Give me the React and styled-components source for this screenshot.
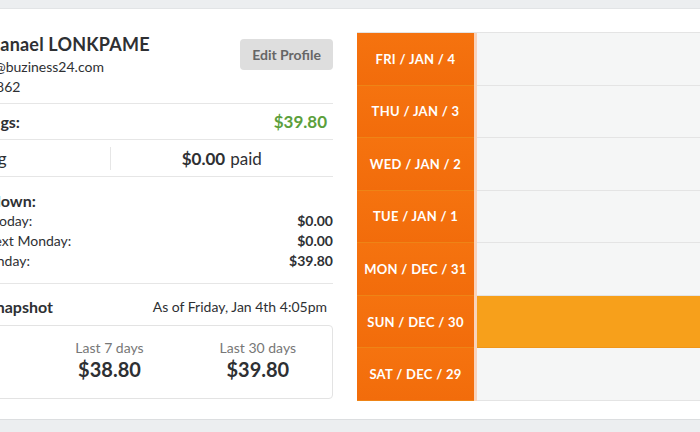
import React from 'react'
import styled, { createGlobalStyle } from 'styled-components'

const GlobalStyle = createGlobalStyle`
  html, body {
    margin: 0;
    padding: 0;
    overflow: hidden;
    background: #eceef0;
  }
  body {
    font-family: Lato, "Open Sans", Arial, sans-serif;
    color: #2e3033;
  }
`

const Page = styled.div`
  width: 700px;
  height: 432px;
  padding-top: 8px;
  box-sizing: border-box;
  overflow: hidden;
`

const Panel = styled.div`
  display: flex;
  gap: 24px;
  margin-left: -138px;
  width: 1100px;
  height: 412px;
  box-sizing: border-box;
  padding: 23px 24px 0;
  background: #fff;
  border-top: 1px solid #e2e4e6;
  border-bottom: 1px solid #dcdee0;
`

const Profile = styled.div`
  width: 447px;
  flex-shrink: 0;
`

const Header = styled.div`
  display: flex;
  justify-content: space-between;
  align-items: flex-start;
  padding-bottom: 6px;
  border-bottom: 1px solid #e6e6e6;
`

const Identity = styled.div`
  display: flex;
  gap: 12px;
`

const Avatar = styled.div`
  width: 62px;
  height: 62px;
  border-radius: 50%;
  background: #d9dcdf;
`

const Name = styled.div`
  font-size: 18px;
  font-weight: 700;
  line-height: 25px;
  letter-spacing: 0.2px;
`

const Line = styled.div`
  font-size: 14px;
  line-height: 20px;
`

const EditButton = styled.button`
  margin-top: 7px;
  height: 31px;
  width: 93px;
  border: none;
  border-radius: 4px;
  background: #dedede;
  color: #666;
  font-family: inherit;
  font-size: 14px;
  font-weight: 700;
`

const Row = styled.div`
  display: flex;
  align-items: center;
  justify-content: space-between;
  height: ${(p) => p.h}px;
  box-sizing: border-box;
  border-bottom: 1px solid #e6e6e6;
  font-size: 16px;
`

const SplitRow = styled.div`
  display: grid;
  grid-template-columns: 1fr 1fr;
  align-items: center;
  height: 37px;
  box-sizing: border-box;
  border-bottom: 1px solid #e6e6e6;
  font-size: 16px;
`

const Title = styled.span`
  font-weight: 700;
  font-size: 16px;
`

const Green = styled.span`
  color: #5c9f3c;
  font-weight: 700;
  font-size: 17px;
  padding-right: 6px;
`

const Half = styled.div`
  height: 23px;
  display: flex;
  align-items: center;
  justify-content: ${(p) => (p.right ? 'flex-end' : 'center')};
  padding-right: ${(p) => (p.right ? '103px' : '0')};
  border-left: ${(p) => (p.divided ? '1px solid #e6e6e6' : 'none')};
  font-size: 17px;
  b {
    font-weight: 700;
    margin-right: 5px;
  }
`

const Section = styled.div`
  padding: 14px 0 12px;
  border-bottom: 1px solid #e6e6e6;
`

const SectionTitle = styled.div`
  font-size: 16px;
  font-weight: 700;
  line-height: 20px;
`

const Item = styled.div`
  display: flex;
  justify-content: space-between;
  font-size: 14px;
  line-height: 20px;
  b {
    font-weight: 700;
  }
`

const SnapHead = styled.div`
  display: flex;
  justify-content: space-between;
  padding: 13px 6px 0 0;
  line-height: 20px;
  font-size: 14px;
`

const Card = styled.div`
  margin-top: 8px;
  display: grid;
  grid-template-columns: repeat(3, 1fr);
  height: 74px;
  box-sizing: border-box;
  padding-top: 13px;
  border: 1px solid #e3e3e3;
  border-radius: 4px;
  text-align: center;
`

const Label = styled.div`
  font-size: 14px;
  line-height: 18px;
  color: #777;
`

const Amount = styled.div`
  font-size: 20px;
  font-weight: 700;
  line-height: 24px;
`

const Calendar = styled.div`
  width: 600px;
  height: 369px;
  flex-shrink: 0;
  display: grid;
  grid-template-rows: repeat(7, 1fr);
  border-top: 1px solid #e4e4e4;
  box-sizing: border-box;
`

const Day = styled.div`
  display: flex;
`

const DateCell = styled.div`
  width: 117px;
  display: flex;
  align-items: center;
  justify-content: center;
  background: linear-gradient(#f5730f, #f26c0b);
  border-bottom: 1px solid #ee8416;
  color: #fff;
  font-size: 13px;
  font-weight: 700;
  letter-spacing: 0.3px;
`

const Stripe = styled.div`
  width: 3px;
  background: #f9d3bb;
`

const Slot = styled.div`
  flex: 1;
  background: ${(p) => (p.active ? '#f7a01b' : '#f5f6f6')};
  border-bottom: 1px solid ${(p) => (p.active ? '#f0961a' : '#e4e4e4')};
`

const days = [
  'FRI / JAN / 4',
  'THU / JAN / 3',
  'WED / JAN / 2',
  'TUE / JAN / 1',
  'MON / DEC / 31',
  'SUN / DEC / 30',
  'SAT / DEC / 29',
]

export default function App() {
  return (
    <Page>
      <GlobalStyle />
      <Panel>
        <Profile>
          <Header>
            <Identity>
              <Avatar />
              <div>
                <Name>Nathanael LONKPAME</Name>
                <Line>nlonk@buziness24.com</Line>
                <Line>964 7862</Line>
              </div>
            </Identity>
            <EditButton>Edit Profile</EditButton>
          </Header>
          <Row h={36}>
            <Title>Total Net Earnings:</Title>
            <Green>$39.80</Green>
          </Row>
          <SplitRow>
            <Half right>
              <b>$39.80</b> pending
            </Half>
            <Half divided>
              <b>$0.00</b> paid
            </Half>
          </SplitRow>
          <Section>
            <SectionTitle>Earnings Breakdown:</SectionTitle>
            <Item>
              <span>Ready for payout today:</span>
              <b>$0.00</b>
            </Item>
            <Item>
              <span>Will be paid out next Monday:</span>
              <b>$0.00</b>
            </Item>
            <Item>
              <span>Paid following Monday:</span>
              <b>$39.80</b>
            </Item>
          </Section>
          <SnapHead>
            <Title>Your Earnings Snapshot</Title>
            <span>As of Friday, Jan 4th 4:05pm</span>
          </SnapHead>
          <Card>
            <div>
              <Label>Today</Label>
              <Amount>$0.00</Amount>
            </div>
            <div>
              <Label>Last 7 days</Label>
              <Amount>$38.80</Amount>
            </div>
            <div>
              <Label>Last 30 days</Label>
              <Amount>$39.80</Amount>
            </div>
          </Card>
        </Profile>
        <Calendar>
          {days.map((d, i) => (
            <Day key={d}>
              <DateCell>{d}</DateCell>
              <Stripe />
              <Slot active={i === 5} />
            </Day>
          ))}
        </Calendar>
      </Panel>
    </Page>
  )
}
